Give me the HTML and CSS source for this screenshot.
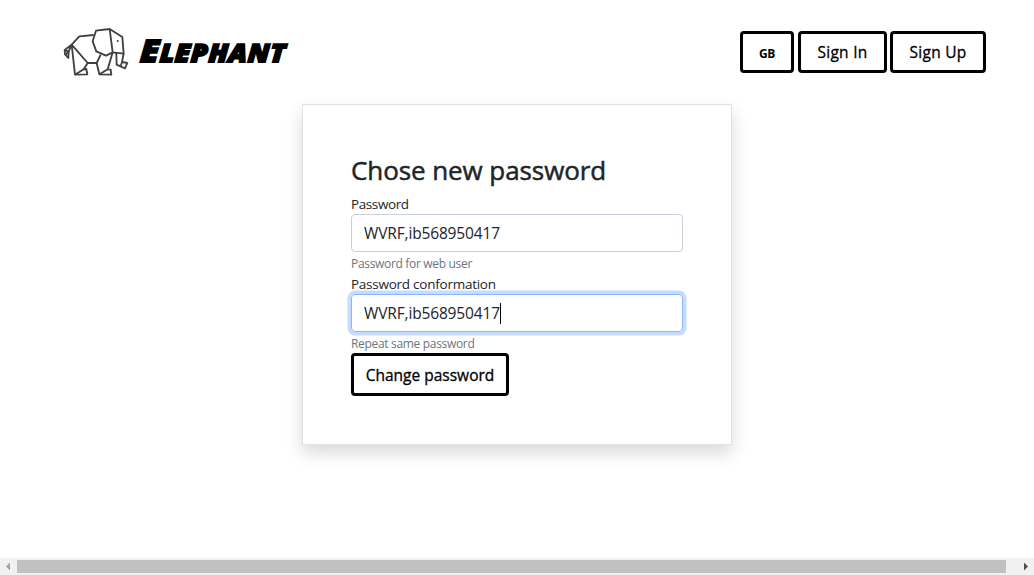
FILE: index.html
```html
<!DOCTYPE html>
<html lang="en">
<head>
<meta charset="utf-8">
<title>Elephant</title>
<link rel="stylesheet" href="styles.css">
</head>
<body>
<header class="header">
  <a class="brand">
    <svg class="brand-icon" viewBox="0 0 240 192" fill="none" stroke="#404040" stroke-width="5.5" stroke-linejoin="round">
      <path d="M113 45L70 49L47 74L26 90L27 103L37 114L38 94L47 74"/>
      <path d="M27 91L38 94L29 104"/>
      <path d="M47 74L57 164L94 163L91 147L83 148L95 129L47 74"/>
      <path d="M59 163L83 148M95 129H122L130 163L166 164L164 149L155 148L170 97"/>
      <path d="M122 129L134 104M132 162L155 148"/>
      <path d="M161 27L120 32L110 64L121 94L150 107L170 97L161 27L199 51L203 101L170 97"/>
      <path d="M181 99L182 134L207 145L214 129L198 126L203 101M198 126L194 139"/>
      <circle cx="185" cy="63" r="3" fill="#404040" stroke="none"/>
    </svg>
    <span class="brand-name">Elephant</span>
  </a>
  <nav class="nav">
    <button class="btn btn-lang">GB</button>
    <button class="btn btn-in">Sign In</button>
    <button class="btn btn-up">Sign Up</button>
  </nav>
</header>
<main class="main">
  <form class="card">
    <h1 class="title">Chose new password</h1>
    <label class="label">Password</label>
    <div class="input">WVRF,ib568950417</div>
    <div class="help">Password for web user</div>
    <label class="label label-long">Password conformation</label>
    <div class="input input-focus">WVRF,ib568950417<i class="caret"></i></div>
    <div class="help help-second">Repeat same password</div>
    <button type="button" class="btn btn-submit">Change password</button>
  </form>
</main>
<div class="scrollbar">
  <svg class="arrow" viewBox="0 0 17 17"><path d="M10 4.500v8L6 8.500z" fill="#a3a3a3"/></svg>
  <div class="thumb"></div>
  <svg class="arrow arrow-right" viewBox="0 0 17 17"><path d="M7 4.500v8L11 8.500z" fill="#505050"/></svg>
</div>
</body>
</html>
```
FILE: styles.css
```css
* { box-sizing: border-box; }
body {
  margin: 0;
  height: 575px;
  display: flex;
  flex-direction: column;
  overflow: hidden;
  background: #fff;
  color: #212529;
  font-family: "Open Sans", "Noto Sans", sans-serif;
  font-size: 16px;
}
.header {
  height: 104px;
  padding: 20px 48px 0 56px;
  display: flex;
  justify-content: space-between;
  align-items: flex-start;
}
.brand { display: flex; color: #000; }
.brand-icon { width: 80px; height: 64px; }
.brand-name {
  display: block;
  margin: 10px 0 0 4px;
  font-size: 25px;
  line-height: 40px;
  font-weight: 800;
  font-style: italic;
  text-transform: uppercase;
  letter-spacing: .8px;
  -webkit-text-stroke: 1.8px #000;
  stroke-linejoin: round;
  transform-origin: left center;
  transform: scaleX(1.08) skewX(-3deg);
}
.brand-name::first-letter { font-size: 31px; }
.nav { display: flex; padding-top: 11px; }
.btn {
  height: 42px;
  padding: 0;
  border: 3px solid #000;
  border-radius: 4px;
  background: #fff;
  color: #000;
  font: 500 15.5px/24px "Open Sans", "Noto Sans", sans-serif;
  -webkit-text-stroke: .3px #000;
  white-space: nowrap;
}
.btn-lang { width: 54px; font-size: 12px; font-weight: 700; padding-top: 3px; letter-spacing: -.3px; -webkit-text-stroke: 0; }
.btn-in { width: 89px; margin-left: 4px; letter-spacing: .25px; }
.btn-up { width: 96px; margin-left: 3px; letter-spacing: .25px; }
.main { flex: 1; display: flex; justify-content: center; align-items: flex-start; }
.card {
  width: 430px;
  height: 341px;
  padding: 48px;
  border: 1px solid #dee2e6;
  background: #fff;
  box-shadow: 0 8px 16px rgba(0, 0, 0, .15);
}
.title {
  margin: 0 0 7px;
  font-size: 26px;
  line-height: 34px;
  font-weight: 500;
  letter-spacing: -.08px;
  -webkit-text-stroke: .5px #212529;
  white-space: nowrap;
}
.label { display: block; height: 20px; font-size: 13.500px; line-height: 20px; letter-spacing: -.4px; white-space: nowrap; }
.label-long { letter-spacing: -.25px; }
.input {
  height: 38px;
  padding: 0 12px;
  display: flex;
  align-items: center;
  border: 1px solid #c6d0dc;
  border-radius: 4px;
  font-size: 15.500px;
  letter-spacing: -.15px;
}
.input-focus { border-color: #86b7fe; box-shadow: 0 0 0 3.5px #c5dcff; }
.caret { width: 1px; height: 21px; background: #000; }
.help { height: 22px; padding-top: 2px; font-size: 12px; line-height: 20px; letter-spacing: -.32px; color: #6c757d; white-space: nowrap; }
.help-second { height: 21px; }
.btn-submit { display: block; width: 158px; height: 43px; padding-top: 1px; }
.scrollbar { height: 17px; display: flex; background: #f1f1f1; }
.arrow { width: 17px; height: 17px; }
.thumb { width: 989px; height: 13px; margin-top: 2px; background: #c1c1c1; }
.arrow-right { margin-left: 11px; }
```
